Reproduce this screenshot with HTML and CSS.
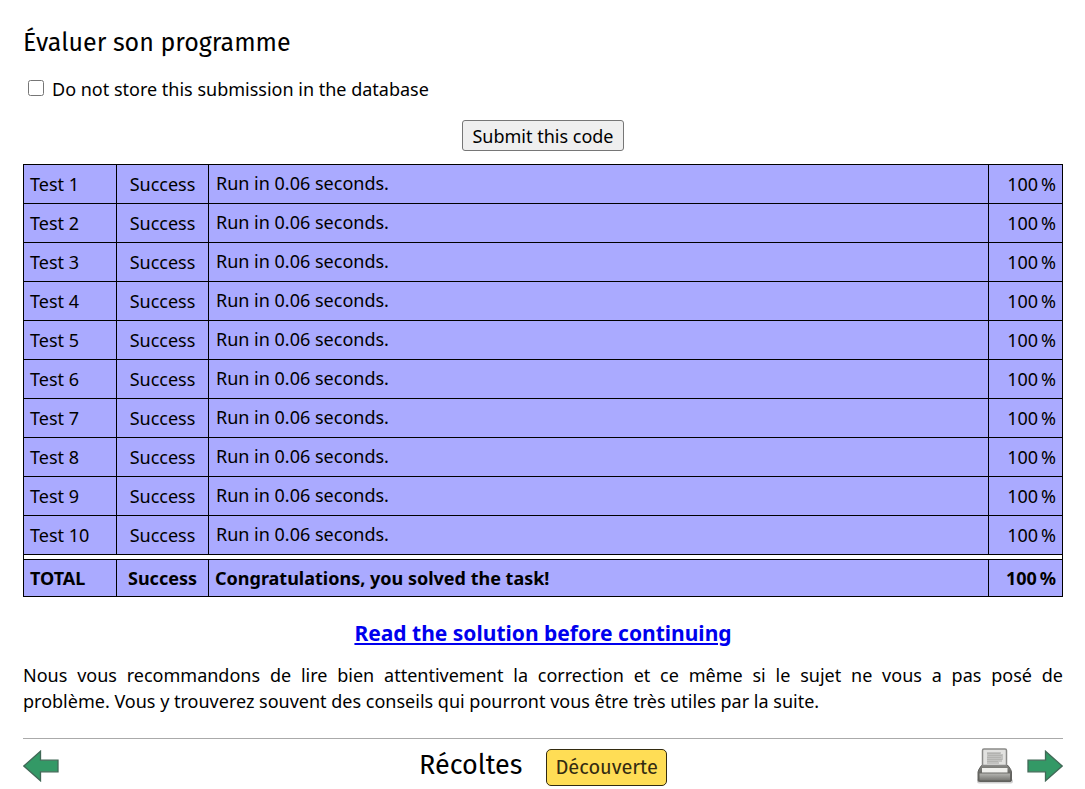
FILE: index.html
```html
<!DOCTYPE html>
<html lang="fr">
<head>
<meta charset="utf-8">
<title>Récoltes</title>
<link rel="stylesheet" href="styles.css">
</head>
<body>
<main>
<h2 class="title">Évaluer son programme</h2>
<form class="submit-form">
<div class="option"><input type="checkbox" id="nostore"><label for="nostore">Do not store this submission in the database</label></div>
<button type="button" class="submit">Submit this code</button>
</form>
<table class="results">
<colgroup><col class="col-name"><col class="col-status"><col><col class="col-score"></colgroup>
<tbody>
<tr><td>Test 1</td><td class="status">Success</td><td class="message">Run in 0.06 seconds.</td><td class="score">100&#8239;%</td></tr>
<tr><td>Test 2</td><td class="status">Success</td><td class="message">Run in 0.06 seconds.</td><td class="score">100&#8239;%</td></tr>
<tr><td>Test 3</td><td class="status">Success</td><td class="message">Run in 0.06 seconds.</td><td class="score">100&#8239;%</td></tr>
<tr><td>Test 4</td><td class="status">Success</td><td class="message">Run in 0.06 seconds.</td><td class="score">100&#8239;%</td></tr>
<tr><td>Test 5</td><td class="status">Success</td><td class="message">Run in 0.06 seconds.</td><td class="score">100&#8239;%</td></tr>
<tr><td>Test 6</td><td class="status">Success</td><td class="message">Run in 0.06 seconds.</td><td class="score">100&#8239;%</td></tr>
<tr><td>Test 7</td><td class="status">Success</td><td class="message">Run in 0.06 seconds.</td><td class="score">100&#8239;%</td></tr>
<tr><td>Test 8</td><td class="status">Success</td><td class="message">Run in 0.06 seconds.</td><td class="score">100&#8239;%</td></tr>
<tr><td>Test 9</td><td class="status">Success</td><td class="message">Run in 0.06 seconds.</td><td class="score">100&#8239;%</td></tr>
<tr><td>Test 10</td><td class="status">Success</td><td class="message">Run in 0.06 seconds.</td><td class="score">100&#8239;%</td></tr>
</tbody>
<tbody><tr class="spacer"><td colspan="4"></td></tr></tbody>
<tfoot><tr class="total"><td>TOTAL</td><td class="status">Success</td><td>Congratulations, you solved the task!</td><td class="score">100&#8239;%</td></tr></tfoot>
</table>
<p class="solution"><a href="#solution">Read the solution before continuing</a></p>
<p class="advice">Nous vous recommandons de lire bien attentivement la correction et ce même si le sujet ne vous a pas posé de problème.&nbsp;Vous y trouverez souvent des conseils qui pourront vous être très utiles par la suite.</p>
</main>
<footer class="footer">
<a href="#previous" class="icon" aria-label="Précédent"><svg width="36" height="32" viewBox="0 0 36 32"><path d="M.8 16 17.5 1.2V10.200H35V21.800H17.500V30.800Z" fill="#339966" stroke="#416957" stroke-width="1.300"/></svg></a>
<div class="topic"><span class="topic-name">Récoltes</span><span class="badge">Découverte</span></div>
<div class="tools">
<a href="#print" class="icon" aria-label="Imprimer"><svg width="36" height="36" viewBox="0 0 36 36">
<defs>
<linearGradient id="body" x1="0" y1="0" x2="0" y2="1"><stop offset="0" stop-color="#858581"/><stop offset=".45" stop-color="#6b6b67"/><stop offset="1" stop-color="#5c5c58"/></linearGradient>
<linearGradient id="front" x1="0" y1="0" x2="0" y2="1"><stop offset="0" stop-color="#b4b4b0"/><stop offset="1" stop-color="#767672"/></linearGradient>
</defs>
<rect x="0" y="31" width="36" height="4.500" rx="2" fill="#d0d0d0"/>
<path d="M4.500 17.500H31Q34.500 22 34.500 24V32Q34.500 33.500 33 33.500H2.500Q1 33.500 1 32V24Q1 22 4.500 17.500Z" fill="url(#body)" stroke="#62625f"/>
<path d="M2.500 25.500H33V32.500H2.500Z" fill="url(#front)"/>
<path d="M5 20H30.500V24.500H5Z" fill="#f1f1ee"/>
<path d="M5.500 17.500V2.500Q5.500 1 7 1H28Q29.500 1 29.500 2.500V17.500Z" fill="#e2e2e0" stroke="#8a8a88" stroke-width="1.500"/>
<path d="M10 4H24V6H26V12H25V14H22V16H10Z" fill="#c2c2c0"/>
<path d="M10 5.500H23M11 7.500H25M10 9.500H24M10 11.500H25M10 13.500H21" stroke="#aeaeac" stroke-width=".8"/>
</svg></a>
<a href="#next" class="icon" aria-label="Suivant"><svg width="36" height="32" viewBox="0 0 36 32"><path d="M35.200 16 18.500 1.200V10.200H1V21.800H18.500V30.800Z" fill="#339966" stroke="#416957" stroke-width="1.300"/></svg></a>
</div>
</footer>
</body>
</html>
```
FILE: styles.css
```css
* { box-sizing: border-box; }
body {
  margin: 0;
  padding: 25px 22px 0 23px;
  background: #fff;
  color: #000;
  font-family: "Noto Sans", sans-serif;
  font-size: 18px;
  line-height: 26px;
}
.title {
  margin: 0 0 15px;
  font-family: "Fira Sans", "Noto Sans", sans-serif;
  font-size: 25px;
  font-weight: 400;
  line-height: 36px;
}
.submit-form { display: flex; flex-direction: column; }
.option { display: flex; align-items: center; gap: 8px; }
.option input { width: 16px; height: 16px; margin: 0 0 2px 5px; }
.submit {
  align-self: center;
  margin: 18px 0 13px;
  padding: 2px 9px 0;
  border: 1px solid #767676;
  border-radius: 3px;
  background: #efefef;
  color: #000;
  font: inherit;
  line-height: 27px;
}
.results {
  width: 100%;
  table-layout: fixed;
  border-collapse: collapse;
}
.col-name { width: 93px; }
.col-status { width: 92px; }
.col-score { width: 74px; }
.results td {
  height: 39px;
  padding: 0 6px;
  border: 1px solid #000;
  background: #aaf;
}
.results .status { text-align: center; }
.results .message { padding: 0 7px 2px; }
.results .score { text-align: right; }
.results .spacer td { height: 5px; padding: 0; background: #fff; }
.results .total td { height: 37px; font-weight: 700; }
.solution {
  margin: 22px 0 15px;
  text-align: center;
  font-size: 21px;
  font-weight: 700;
  line-height: 28px;
}
.solution a { color: #00e; }
.advice { margin: 0; text-align: justify; }
.footer {
  display: grid;
  grid-template-columns: 1fr auto 1fr;
  align-items: center;
  margin-top: 24px;
  padding-top: 8px;
  border-top: 1px solid #aaa;
  font-family: "Fira Sans", "Noto Sans", sans-serif;
}
.icon { display: flex; margin-bottom: 2px; }
.topic { display: flex; align-items: baseline; gap: 24px; }
.topic-name { font-size: 27px; line-height: 36px; }
.badge {
  padding: 0 8px;
  border: 1px solid #332b11;
  border-radius: 5px;
  background: #fd5;
  color: #332b11;
  font-size: 20px;
  line-height: 35px;
}
.tools { display: flex; justify-content: flex-end; align-items: center; gap: 14px; }
```
